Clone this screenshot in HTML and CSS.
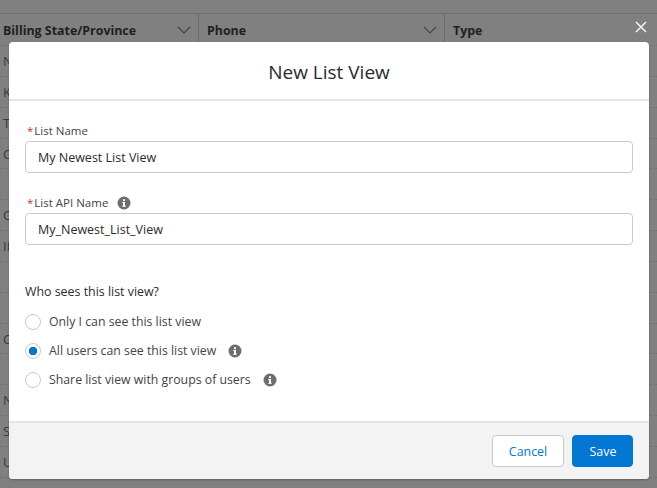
FILE: index.html
```html
<!DOCTYPE html>
<html lang="en">
<head>
<meta charset="utf-8">
<title>New List View</title>
<link rel="stylesheet" href="styles.css">
</head>
<body>
<div class="page">
  <div class="table-head">
    <div class="th th-first"><span>Billing State/Province</span><svg class="chev" viewBox="0 0 14 8"><path d="M1 1l6 6 6-6"/></svg></div>
    <div class="th th-second"><span>Phone</span><svg class="chev" viewBox="0 0 14 8"><path d="M1 1l6 6 6-6"/></svg></div>
    <div class="th th-third"><span>Type</span></div>
  </div>
  <div class="rows">
    <div class="row">N</div><div class="row">K</div><div class="row">T</div><div class="row">C</div><div class="row"></div>
    <div class="row">C</div><div class="row">IL</div><div class="row"></div><div class="row"></div><div class="row">C</div>
    <div class="row"></div><div class="row">N</div><div class="row">S</div><div class="row">U</div>
  </div>
</div>
<svg class="close" viewBox="0 0 12 12"><path d="M1 1l10 10M11 1L1 11"/></svg>
<div class="modal">
  <header class="modal-head"><h1>New List View</h1></header>
  <div class="modal-body">
    <div class="field">
      <label class="label"><abbr>*</abbr>List Name</label>
      <div class="input">My Newest List View</div>
    </div>
    <div class="field field-api">
      <label class="label"><abbr>*</abbr>List API Name<svg class="info info-label" viewBox="0 0 14 14"><circle cx="7" cy="7" r="6.5"/><rect x="6" y="6" width="2" height="4.6"/><rect x="6" y="3.2" width="2" height="1.9"/><rect x="5.2" y="6" width="1" height="0.9"/><rect x="5.2" y="9.8" width="3.6" height="0.9"/></svg></label>
      <div class="input">My_Newest_List_View</div>
    </div>
    <div class="group">
      <div class="legend">Who sees this list view?</div>
      <div class="radio"><span class="dot"></span>Only I can see this list view</div>
      <div class="radio"><span class="dot dot-on"></span>All users can see this list view<svg class="info" viewBox="0 0 14 14"><circle cx="7" cy="7" r="6.5"/><rect x="6" y="6" width="2" height="4.6"/><rect x="6" y="3.2" width="2" height="1.9"/><rect x="5.2" y="6" width="1" height="0.9"/><rect x="5.2" y="9.8" width="3.6" height="0.9"/></svg></div>
      <div class="radio"><span class="dot"></span>Share list view with groups of users<svg class="info" viewBox="0 0 14 14"><circle cx="7" cy="7" r="6.5"/><rect x="6" y="6" width="2" height="4.6"/><rect x="6" y="3.2" width="2" height="1.9"/><rect x="5.2" y="6" width="1" height="0.9"/><rect x="5.2" y="9.8" width="3.6" height="0.9"/></svg></div>
    </div>
  </div>
  <footer class="modal-foot">
    <button class="btn btn-neutral">Cancel</button>
    <button class="btn btn-brand">Save</button>
  </footer>
</div>
</body>
</html>
```
FILE: styles.css
```css
* { box-sizing: border-box; }
html, body { margin: 0; height: 100%; }
body {
  width: 657px;
  height: 488px;
  overflow: hidden;
  position: relative;
  background: #808080;
  font-family: "Open Sans", "Noto Sans", sans-serif;
  font-size: 12px;
  color: #3e3e3c;
}
.page { padding-top: 13px; }
.table-head {
  display: flex;
  height: 33px;
  border-top: 1px solid #6c6c6c;
  border-bottom: 1px solid #777;
  font-size: 12.4px;
  font-weight: 700;
  color: #1f1f1f;
}
.th { display: flex; align-items: center; justify-content: space-between; padding: 1px 7px 0 3px; }
.th-first { width: 199px; border-right: 1px solid #6c6c6c; }
.th-second { width: 246px; border-right: 1px solid #6c6c6c; padding-left: 8px; }
.th-third { flex: 1; padding-left: 8px; }
.chev { width: 14px; height: 8px; fill: none; stroke: #444; stroke-width: 1.1; }
.rows { color: #3a3a3a; font-size: 13px; }
.row {
  height: 30.85px;
  line-height: 30px;
  padding-left: 3px;
  border-bottom: 1px dashed #727272;
}
.close {
  position: absolute;
  top: 21px;
  left: 635px;
  width: 12px;
  height: 12px;
  fill: none;
  stroke: #f4f4f4;
  stroke-width: 1.5;
}
.modal {
  position: absolute;
  left: 9px;
  top: 42px;
  width: 640px;
  height: 437px;
  display: flex;
  flex-direction: column;
  background: #fff;
  border-radius: 4px;
  overflow: hidden;
  box-shadow: 0 1px 2px rgba(0, 0, 0, .25);
}
.modal-head {
  height: 59px;
  border-bottom: 2px solid #e5e5e5;
  display: flex;
  align-items: center;
  justify-content: center;
  padding-top: 3px;
}
.modal-head h1 { margin: 0; font-size: 19px; font-weight: 400; color: #2b2b2b; }
.modal-body { flex: 1; padding: 21px 16px 0; }
.field { display: flex; flex-direction: column; }
.field-api { margin-top: 21px; }
.label { height: 19px; font-size: 11.5px; line-height: 18px; color: #444; padding-left: 2px; display: flex; align-items: flex-start; }
.label abbr { color: #c23934; margin-right: 1px; }
.input {
  height: 32px;
  border: 1px solid #c9c9c9;
  border-radius: 4px;
  padding: 0 12px;
  line-height: 32px;
  font-size: 12.5px;
  color: #2b2b2b;
}
.group { margin-top: 38px; }
.legend { font-size: 12.4px; line-height: 18px; margin-bottom: 6px; color: #2b2b2b; }
.radio { display: flex; align-items: center; height: 29px; font-size: 12.3px; color: #444; }
.dot {
  width: 16px;
  height: 16px;
  border: 1px solid #c9c9c9;
  border-radius: 50%;
  margin-right: 8px;
  background: #fff;
}
.dot-on { background: radial-gradient(circle, #0176d3 0 4px, #fff 4.5px); }
.info { width: 14px; height: 14px; margin-left: 12px; }
.info-label { margin-left: 9px; margin-top: 2px; }
.info circle { fill: #706e6b; }
.info rect { fill: #fff; }
.modal-foot {
  height: 58px;
  background: #f3f3f3;
  border-top: 2px solid #e5e5e5;
  display: flex;
  justify-content: flex-end;
  align-items: center;
  gap: 8px;
  padding: 0 16px;
}
.btn { height: 32px; border-radius: 4px; font: inherit; font-size: 12.4px; padding: 0; }
.btn-neutral { width: 72px; background: #fff; border: 1px solid #c9c9c9; color: #0176d3; }
.btn-brand { width: 61px; background: #0176d3; border: 1px solid #0176d3; color: #fff; padding-left: 1px; }
```
